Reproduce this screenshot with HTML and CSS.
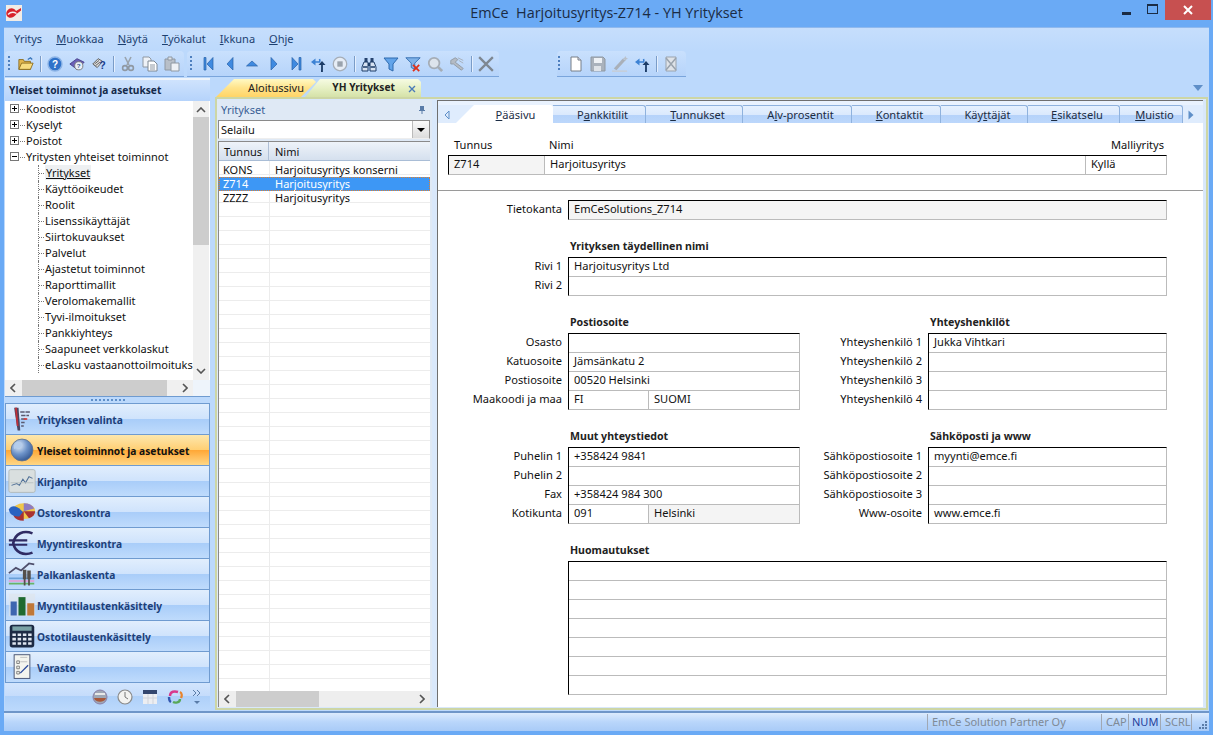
FILE: index.html
```html
<!DOCTYPE html>
<html lang="fi">
<head>
<meta charset="utf-8">
<title>EmCe Harjoitusyritys-Z714 - YH Yritykset</title>
<link rel="stylesheet" href="styles.css">
</head>
<body>
<div class="window">
  <header class="titlebar">
    <svg class="logo" viewBox="0 0 16 16"><rect width="16" height="16" fill="#f1ece6"/><path d="M1 6C4 2 8 3 10 6L15 3V5.5L10.5 9C8 13 3 14 1 11C0 9 0 8 1 6Z" fill="#d8222a"/><path d="M2 9.5C5 6.5 8 7 10.5 8.5" fill="none" stroke="#f6eeee" stroke-width="1.4"/></svg>
    <div class="title">EmCe&nbsp; Harjoitusyritys-Z714 - YH Yritykset</div>
    <div class="controls">
      <span class="ctl"><i class="min"></i></span>
      <span class="ctl"><i class="max"></i></span>
      <span class="ctl close"><svg viewBox="0 0 10 10" width="10" height="10"><path d="M1 1L9 9M9 1L1 9" stroke="#fff" stroke-width="2"/></svg></span>
    </div>
  </header>
  <div class="client">
    <nav class="menubar">
      <span>Yritys</span><span><u>M</u>uokkaa</span><span><u>N</u>äytä</span><span><u>T</u>yökalut</span><span><u>I</u>kkuna</span><span><u>O</u>hje</span>
    </nav>
    <div class="toolbars">
      <div class="tb tb1">
        <i class="grip"></i>
        <b class="ti"><svg viewBox="0 0 18 16"><path d="M1 3H6L7 5H14V14H1Z" fill="#e2b64e" stroke="#8a6a1c"/><path d="M1 14L4 7H17L14 14Z" fill="#f8dc80" stroke="#8a6a1c"/><path d="M11 3L14 1L16 3" fill="none" stroke="#3573b8" stroke-width="1.4"/></svg></b>
        <i class="sep"></i>
        <b class="ti"><svg viewBox="0 0 16 16"><circle cx="8" cy="8" r="7" fill="#2f72c9" stroke="#8db4e6" stroke-width="1.4"/><text x="8" y="12" class="gq">?</text></svg></b>
        <b class="ti"><svg viewBox="0 0 18 16"><path d="M1 8L9 2L17 6L9 14Z" fill="#6a5fb8" stroke="#453b86"/><circle cx="11" cy="10" r="4.6" fill="#e8eef7" stroke="#777"/><text x="11" y="13" class="gq small">?</text></svg></b>
        <b class="ti"><svg viewBox="0 0 18 16"><path d="M2 8L8 2L13 5L7 12Z" fill="#ddd" stroke="#555"/><path d="M4 8L9 4M5 10L10 6" stroke="#555"/><text x="13" y="14" class="gqb">?</text></svg></b>
        <i class="sep"></i>
        <b class="ti"><svg viewBox="0 0 16 16"><path d="M5 1L9 9M11 1L7 9" stroke="#9aa3ad" stroke-width="1.6"/><circle cx="5" cy="12" r="2.4" fill="none" stroke="#8f98a2" stroke-width="1.6"/><circle cx="11" cy="12" r="2.4" fill="none" stroke="#8f98a2" stroke-width="1.6"/></svg></b>
        <b class="ti"><svg viewBox="0 0 16 16"><path d="M1 1H7L9 3V11H1Z" fill="#eef2f7" stroke="#8f98a2"/><path d="M6 5H12L15 8V15H6Z" fill="#fff" stroke="#7f8994"/><path d="M8 9H13M8 11H13M8 13H13" stroke="#8f98a2"/></svg></b>
        <b class="ti"><svg viewBox="0 0 16 16"><path d="M1 3H11V14H1Z" fill="#b8bfc8" stroke="#8f98a2"/><path d="M4 1H8V4H4Z" fill="#dfe3e8" stroke="#8f98a2"/><path d="M7 7H15V15H7Z" fill="#eef1f5" stroke="#8f98a2"/></svg></b>
      </div>
      <div class="tb tb2">
        <i class="grip"></i>
        <b class="ti"><svg viewBox="0 0 16 16"><path d="M4 1.5H6V14H4ZM13 1.5V14L7 8Z" fill="#3f8ae0" stroke="#2a62a8" stroke-width=".7"/></svg></b>
        <b class="ti"><svg viewBox="0 0 16 16"><path d="M11 1.5V14L5 8Z" fill="#3f8ae0" stroke="#2a62a8" stroke-width=".7"/></svg></b>
        <b class="ti"><svg viewBox="0 0 16 16"><path d="M2.5 10H13.5L8 5Z" fill="#3f8ae0" stroke="#2a62a8" stroke-width=".7"/></svg></b>
        <b class="ti"><svg viewBox="0 0 16 16"><path d="M5 1.5V14L11 8Z" fill="#3f8ae0" stroke="#2a62a8" stroke-width=".7"/></svg></b>
        <b class="ti"><svg viewBox="0 0 16 16"><path d="M4 1.5V14L10 8ZM11 1.5H13V14H11Z" fill="#3f8ae0" stroke="#2a62a8" stroke-width=".7"/></svg></b>
        <b class="ti"><svg viewBox="0 0 16 16"><path d="M1 6L5.5 2.5V9.5Z" fill="#3d82d4"/><path d="M5 6H9.5C10 5 10 4 9.5 3" fill="none" stroke="#3d82d4" stroke-width="1.6"/><path d="M8.5 9L12 5L15.5 9Z" fill="#1d3d68"/><path d="M12 8V15L11 15" fill="none" stroke="#1d3d68" stroke-width="1.8"/></svg></b>
        <b class="ti"><svg viewBox="0 0 18 18"><circle cx="9" cy="9" r="7.6" fill="#e6edf6" stroke="#a6aeb8" stroke-width="1.4"/><rect x="6" y="6" width="6" height="6" fill="#9aa3ad"/></svg></b>
        <i class="sep"></i>
        <b class="ti"><svg viewBox="0 0 16 16"><path d="M3.5 2H6.5V6H3.5ZM9.5 2H12.5V6H9.5Z" fill="#26436e"/><path d="M3 6H7V15H1V11ZM9 6H13L15 11V15H9Z" fill="#d6e2f2" stroke="#1d3d68"/><path d="M7 7H9V10H7Z" fill="#1d3d68"/><path d="M2 11H6.5M9.5 11H14" stroke="#1d3d68" stroke-width="1.4"/></svg></b>
        <b class="ti"><svg viewBox="0 0 16 16"><path d="M1 2H15L10 8V15L6 13V8Z" fill="#62a4ea" stroke="#2f6aae"/></svg></b>
        <b class="ti"><svg viewBox="0 0 18 18"><path d="M1 2H17L11 8V15L7 13V8Z" fill="#7fb2e8" stroke="#2f6aae"/><path d="M9 10L16 17M16 10L9 17" stroke="#e03018" stroke-width="2"/></svg></b>
        <b class="ti"><svg viewBox="0 0 18 18"><circle cx="8" cy="8" r="6" fill="#dde4ec" stroke="#a5adb6" stroke-width="2"/><path d="M12 12L17 17" stroke="#a5adb6" stroke-width="3"/></svg></b>
        <b class="ti"><svg viewBox="0 0 18 18"><path d="M2 5L7 2L10 4L7 7L16 14L14 16L5 9L2 9Z" fill="#b4bbc4" stroke="#8f98a2"/><path d="M10 2L16 5M11 5L16 8" stroke="#a5adb6"/></svg></b>
        <i class="sep"></i>
        <b class="ti"><svg viewBox="0 0 14 14"><path d="M1 1L13 13M13 1L1 13" stroke="#7e8791" stroke-width="2"/></svg></b>
      </div>
      <div class="tb tb3">
        <i class="grip"></i>
        <b class="ti"><svg viewBox="0 0 14 16"><path d="M2 1H9L12 4V15H2Z" fill="#fff" stroke="#777f88"/><path d="M9 1V4H12" fill="#dde" stroke="#777f88"/></svg></b>
        <b class="ti"><svg viewBox="0 0 16 16"><path d="M1 1H13L15 3V15H1Z" fill="#aab2bc" stroke="#8f98a2"/><rect x="4" y="2" width="8" height="5" fill="#eef1f5"/><rect x="4" y="10" width="7" height="5" fill="#dfe3e8"/></svg></b>
        <b class="ti"><svg viewBox="0 0 18 18"><path d="M2 14L12 3L15 5L5 16Z" fill="#a9b0b9"/><path d="M15 0L16 2L18 3L16 4L15 6L14 4L12 3L14 2Z" fill="#b9c0c9"/><path d="M0 17H17" stroke="#c8ccd2" stroke-width="1.5"/></svg></b>
        <b class="ti"><svg viewBox="0 0 16 16"><path d="M1 6L5.5 2.5V9.5Z" fill="#3d82d4"/><path d="M5 6H9.5C10 5 10 4 9.5 3" fill="none" stroke="#3d82d4" stroke-width="1.6"/><path d="M8.5 9L12 5L15.5 9Z" fill="#1d3d68"/><path d="M12 8V15L11 15" fill="none" stroke="#1d3d68" stroke-width="1.8"/></svg></b>
        <i class="sep"></i>
        <b class="ti"><svg viewBox="0 0 14 16"><path d="M2 1H12V15H2Z" fill="#dfe3e8" stroke="#9aa3ad"/><path d="M2 2L12 14M12 2L2 14" stroke="#9aa3ad" stroke-width="1.5"/></svg></b>
      </div>
    </div>
    <div class="main">
      <aside class="sidebar">
        <h2 class="side-head">Yleiset toiminnot ja asetukset</h2>
        <div class="tree-wrap">
          <ul class="tree">
            <li class="top"><i class="pm plus"></i>Koodistot</li>
            <li class="top"><i class="pm plus"></i>Kyselyt</li>
            <li class="top"><i class="pm plus"></i>Poistot</li>
            <li class="top"><i class="pm"></i>Yritysten yhteiset toiminnot</li>
            <li class="sub sel"><span>Yritykset</span></li>
            <li class="sub"><span>Käyttöoikeudet</span></li>
            <li class="sub"><span>Roolit</span></li>
            <li class="sub"><span>Lisenssikäyttäjät</span></li>
            <li class="sub"><span>Siirtokuvaukset</span></li>
            <li class="sub"><span>Palvelut</span></li>
            <li class="sub"><span>Ajastetut toiminnot</span></li>
            <li class="sub"><span>Raporttimallit</span></li>
            <li class="sub"><span>Verolomakemallit</span></li>
            <li class="sub"><span>Tyvi-ilmoitukset</span></li>
            <li class="sub"><span>Pankkiyhteys</span></li>
            <li class="sub"><span>Saapuneet verkkolaskut</span></li>
            <li class="sub"><span>eLasku vastaanottoilmoituks</span></li>
          </ul>
          <div class="vscroll">
            <svg class="sa" viewBox="0 0 10 6"><path d="M1 5L5 1L9 5" fill="none" stroke="#555" stroke-width="1.6"/></svg>
            <div class="vthumb"></div>
            <svg class="sa" viewBox="0 0 10 6"><path d="M1 1L5 5L9 1" fill="none" stroke="#555" stroke-width="1.6"/></svg>
          </div>
        </div>
        <div class="hscroll tree-h">
          <svg class="sah" viewBox="0 0 6 10"><path d="M5 1L1 5L5 9" fill="none" stroke="#555" stroke-width="1.6"/></svg>
          <div class="hthumb"></div>
          <svg class="sah" viewBox="0 0 6 10"><path d="M1 1L5 5L1 9" fill="none" stroke="#555" stroke-width="1.6"/></svg>
        </div>
        <div class="splitter"><i></i></div>
        <div class="navs">
          <div class="nav"><svg viewBox="0 0 32 28"><path d="M7 1H12L14 27H11Z" fill="#4a4560"/><path d="M9 1L11 22" stroke="#c0303a" stroke-width="2"/><path d="M14 6H26M15 10H24M15 14H21M15 18H19M15 22H18" stroke="#5a5a70" stroke-width="1.6" stroke-dasharray="5 1"/><path d="M18 14H22" stroke="#d04040" stroke-width="2"/></svg>Yrityksen valinta</div>
          <div class="nav on"><svg viewBox="0 0 32 28"><defs><radialGradient id="gl" cx=".35" cy=".3" r=".8"><stop offset="0" stop-color="#e4eefa"/><stop offset=".5" stop-color="#6d93c9"/><stop offset="1" stop-color="#2c4f8a"/></radialGradient></defs><circle cx="16" cy="14" r="12.5" fill="url(#gl)" stroke="#63758c"/><path d="M10 5C14 4 18 6 16 10C14 13 10 11 7 13C6 10 7 7 10 5Z" fill="#b5cdec"/></svg>Yleiset toiminnot ja asetukset</div>
          <div class="nav"><svg viewBox="0 0 32 28"><rect x="1" y="1" width="30" height="26" rx="2" fill="#d9dfdf" stroke="#aeb6b6"/><path d="M4 19L10 17L13 19L17 12L20 16L24 9L28 11" fill="none" stroke="#4f6f96" stroke-width="1.2"/><path d="M3 16H29" stroke="#b8c0c0"/></svg>Kirjanpito</div>
          <div class="nav"><svg viewBox="0 0 32 28"><ellipse cx="18" cy="13" rx="13" ry="9" fill="#f0c64a"/><path d="M18 13L31 13A13 9 0 0 1 24 21Z" fill="#a83232"/><path d="M18 13L18 24A13 9 0 0 1 6 18Z" fill="#a83232"/><path d="M1 11C4 6 10 6 17 14L13 19C8 19 2 18 1 11Z" fill="#2a62c0"/><path d="M18 4A13 9 0 0 1 30 10L18 13Z" fill="#8f7cc0"/></svg>Ostoreskontra</div>
          <div class="nav"><svg viewBox="0 0 32 28"><path d="M28 3C18 -1 8 3 6 14C8 25 18 29 28 25" fill="none" stroke="#2f2b63" stroke-width="3"/><path d="M1 11H22M1 16H22" stroke="#2f2b63" stroke-width="2.4"/></svg>Myyntireskontra</div>
          <div class="nav"><svg viewBox="0 0 32 28"><path d="M1 13L9 7L15 10L24 2L30 3" fill="none" stroke="#4f4f6c" stroke-width="2"/><path d="M1 22H30" stroke="#e2a0d8" stroke-width="2"/><path d="M1 25H30" stroke="#68b468" stroke-width="2"/><path d="M1 19H30" stroke="#6aa0d8" stroke-width="2"/><path d="M17 9H21V20H20V27H18V20H17ZM22 10H26V20H25V27H23V20H22Z" fill="#55504c"/></svg>Palkanlaskenta</div>
          <div class="nav"><svg viewBox="0 0 32 28"><rect x="1" y="1" width="30" height="26" fill="#dfe4ea" opacity=".6"/><rect x="3" y="10" width="7" height="16" fill="#3e66b0"/><rect x="12" y="5" width="8" height="21" fill="#1f6a30"/><rect x="22" y="12" width="8" height="14" fill="#c07838"/></svg>Myyntitilaustenkäsittely</div>
          <div class="nav"><svg viewBox="0 0 32 28"><rect x="2" y="1" width="28" height="26" rx="3" fill="#1c2a44"/><rect x="5" y="3" width="22" height="5" fill="#7aa2a6"/><g fill="#dfe6f0"><path d="M5 11h4v3H5zM11 11h4v3h-4zM17 11h4v3h-4zM23 11h4v3h-4zM5 16h4v3H5zM11 16h4v3h-4zM17 16h4v3h-4zM23 16h4v3h-4zM5 21h4v3H5zM11 21h4v3h-4zM17 21h4v3h-4zM23 21h4v3h-4z"/></g></svg>Ostotilaustenkäsittely</div>
          <div class="nav"><svg viewBox="0 0 32 28"><rect x="7" y="0" width="18" height="27" fill="#f4f5ef" stroke="#3a4668"/><path d="M10 7h3v3h-3zM10 13h3v3h-3zM10 19h3v3h-3z" fill="none" stroke="#777"/><path d="M14 21L23 12" stroke="#2b4a9a" stroke-width="1.5"/><path d="M14 8H22M14 3H22" stroke="#bbb"/></svg>Varasto</div>
        </div>
        <div class="nav-foot">
          <svg viewBox="0 0 16 16"><circle cx="8" cy="8" r="7" fill="#9fa7b5" stroke="#8a80a8"/><path d="M2 9H14C13 14 3 14 2 9Z" fill="#a8583a"/><path d="M3 5H13" stroke="#e8e8e8" stroke-width="2"/></svg>
          <svg viewBox="0 0 16 16"><circle cx="8" cy="8" r="7" fill="#f2f2f0" stroke="#8a8a8a" stroke-width="1.2"/><path d="M8 3V8L11 10" fill="none" stroke="#777"/></svg>
          <svg viewBox="0 0 16 16"><rect x="1" y="1" width="14" height="14" fill="#eceef2"/><rect x="1" y="1" width="14" height="4" fill="#33466e"/><path d="M1 9H15M6 5V15M11 5V15" stroke="#d0d3da"/></svg>
          <svg viewBox="0 0 16 16"><path d="M3 7C3 2 8 2 11 3" fill="none" stroke="#d83a8c" stroke-width="2.4"/><path d="M13 3C15 4 15 7 14 9" fill="none" stroke="#e8842c" stroke-width="2.4"/><path d="M13 10C13 14 8 14 6 13" fill="none" stroke="#58a858" stroke-width="2.4"/><path d="M4 13C2 12 2 10 2 8" fill="none" stroke="#3458b0" stroke-width="2.4"/></svg>
          <svg class="more" viewBox="0 0 10 16"><path d="M1 1L4 4L1 7M5 1L8 4L5 7" fill="none" stroke="#5a7ca8"/><path d="M2 12H8L5 15Z" fill="#5a7ca8"/></svg>
        </div>
      </aside>
      <section class="workspace">
        <div class="doctabs">
          <div class="dtab yellow">Aloitussivu</div>
          <div class="dtab green">YH Yritykset<svg class="dx" viewBox="0 0 8 8"><path d="M1 1L7 7M7 1L1 7" stroke="#4a7ab8" stroke-width="1.4"/></svg></div>
          <svg class="dmenu" viewBox="0 0 10 6"><path d="M0 0H10L5 6Z" fill="#5f8fc8"/></svg>
        </div>
        <div class="docbody">
          <div class="listpanel">
            <div class="lp-head"><span>Yritykset</span><svg viewBox="0 0 8 10"><path d="M2 1H6V5H7V6H4.5V9H3.5V6H1V5H2Z" fill="#5a7ca8"/></svg></div>
            <div class="combo"><span>Selailu</span><b><svg viewBox="0 0 8 4"><path d="M0 0H8L4 4Z" fill="#000"/></svg></b></div>
            <div class="gridbox">
              <div class="ghead"><span class="c1">Tunnus</span><span class="c2">Nimi</span></div>
              <div class="grows">
                <div class="grow"><span class="c1">KONS</span><span class="c2">Harjoitusyritys konserni</span></div>
                <div class="grow sel"><span class="c1">Z714</span><span class="c2">Harjoitusyritys</span></div>
                <div class="grow"><span class="c1">ZZZZ</span><span class="c2">Harjoitusyritys</span></div>
              </div>
              <div class="hscroll grid-h">
                <svg class="sah" viewBox="0 0 6 10"><path d="M5 1L1 5L5 9" fill="none" stroke="#555" stroke-width="1.6"/></svg>
                <div class="hthumb g"></div>
                <svg class="sah" viewBox="0 0 6 10"><path d="M1 1L5 5L1 9" fill="none" stroke="#555" stroke-width="1.6"/></svg>
              </div>
            </div>
          </div>
          <div class="detail">
            <div class="tabs">
              <svg class="ta" viewBox="0 0 6 10"><path d="M5 1L1 5L5 9Z" fill="#dceafc" stroke="#5f8fc8"/></svg>
              <div class="tab active"><u>P</u>ääsivu</div>
              <div class="tab w93">P<u>a</u>nkkitilit</div>
              <div class="tab w97"><u>T</u>unnukset</div>
              <div class="tab w109">A<u>l</u>v-prosentit</div>
              <div class="tab w89"><u>K</u>ontaktit</div>
              <div class="tab w87">Käy<u>t</u>täjät</div>
              <div class="tab w92"><u>E</u>sikatselu</div>
              <div class="tab w63"><u>M</u>uistio</div>
              <svg class="ta right" viewBox="0 0 6 10"><path d="M0.5 0.5L5.5 5L0.5 9.5Z" fill="#5f8fc8"/></svg>
            </div>
            <div class="form">
              <div class="hd-labels"><span class="h1">Tunnus</span><span class="h2">Nimi</span><span class="h3">Malliyritys</span></div>
              <div class="box hd-box">
                <div class="row">
                  <span class="cell hc1 ro">Z714</span>
                  <span class="cell hc2">Harjoitusyritys</span>
                  <span class="cell hc3">Kyllä</span>
                </div>
              </div>
              <hr class="rule">
              <div class="line dbline"><label>Tietokanta</label><div class="box w599"><div class="row ro"><span class="cell">EmCeSolutions_Z714</span></div></div></div>

              <h3 class="sec one">Yrityksen täydellinen nimi</h3>
              <div class="line"><div class="labels"><label>Rivi 1</label><label>Rivi 2</label></div>
                <div class="box w599"><div class="row"><span class="cell">Harjoitusyritys Ltd</span></div><div class="row"></div></div></div>

              <div class="cols c-post">
                <div class="group">
                  <h3 class="sec">Postiosoite</h3>
                  <div class="line"><div class="labels"><label>Osasto</label><label>Katuosoite</label><label>Postiosoite</label><label>Maakoodi ja maa</label></div>
                    <div class="box w232"><div class="row"></div><div class="row"><span class="cell">Jämsänkatu 2</span></div><div class="row"><span class="cell">00520 Helsinki</span></div><div class="row"><span class="cell code">FI</span><span class="cell">SUOMI</span></div></div></div>
                </div>
                <div class="group right">
                  <h3 class="sec">Yhteyshenkilöt</h3>
                  <div class="line"><div class="labels"><label>Yhteyshenkilö 1</label><label>Yhteyshenkilö 2</label><label>Yhteyshenkilö 3</label><label>Yhteyshenkilö 4</label></div>
                    <div class="box w239"><div class="row"><span class="cell">Jukka Vihtkari</span></div><div class="row"></div><div class="row"></div><div class="row"></div></div></div>
                </div>
              </div>

              <div class="cols c-muut">
                <div class="group">
                  <h3 class="sec">Muut yhteystiedot</h3>
                  <div class="line"><div class="labels"><label>Puhelin 1</label><label>Puhelin 2</label><label>Fax</label><label>Kotikunta</label></div>
                    <div class="box w232"><div class="row"><span class="cell">+358424 9841</span></div><div class="row"></div><div class="row"><span class="cell">+358424 984 300</span></div><div class="row"><span class="cell code">091</span><span class="cell shade">Helsinki</span></div></div></div>
                </div>
                <div class="group right">
                  <h3 class="sec">Sähköposti ja www</h3>
                  <div class="line"><div class="labels"><label>Sähköpostiosoite 1</label><label>Sähköpostiosoite 2</label><label>Sähköpostiosoite 3</label><label>Www-osoite</label></div>
                    <div class="box w239"><div class="row"><span class="cell">myynti@emce.fi</span></div><div class="row"></div><div class="row"></div><div class="row"><span class="cell">www.emce.fi</span></div></div></div>
                </div>
              </div>

              <h3 class="sec notes">Huomautukset</h3>
              <div class="line"><div class="labels"></div>
                <div class="box w599"><div class="row"></div><div class="row"></div><div class="row"></div><div class="row"></div><div class="row"></div><div class="row"></div><div class="row"></div></div></div>
            </div>
          </div>
        </div>
      </section>
    </div>
    <footer class="status">
      <span class="st company">EmCe Solution Partner Oy</span>
      <span class="st cap">CAP</span><span class="st num">NUM</span><span class="st scrl">SCRL</span>
      <svg class="resize" viewBox="0 0 10 10"><path d="M7 1h2v2H7zM4 4h2v2H4zM7 4h2v2H7zM1 7h2v2H1zM4 7h2v2H4zM7 7h2v2H7z" fill="#5a7ca8"/></svg>
    </footer>
  </div>
</div>
</body>
</html>
```
FILE: styles.css
```css
* { box-sizing: border-box; }
html, body { margin: 0; height: 100%; overflow: hidden; }
body { font: 11px/14px "Noto Sans", "Liberation Sans", sans-serif; color: #111; }
ul { margin: 0; padding: 0; list-style: none; }
h2, h3 { margin: 0; }
svg { display: block; flex: none; }
.window { width: 1213px; height: 735px; display: flex; flex-direction: column; background: #6aaaf5; }

.titlebar { height: 27px; flex: none; display: flex; align-items: flex-start; position: relative; }
.logo { width: 16px; height: 16px; margin: 5px 0 0 6px; }
.title { position: absolute; left: 0; right: 0; top: 3px; text-align: center; font: 14.4px/20px "Open Sans", sans-serif; color: #1b2c44; }
.controls { margin-left: auto; margin-right: 2px; display: flex; position: relative; }
.ctl { width: 26px; height: 20px; display: flex; align-items: center; justify-content: center; }
.ctl.close { width: 46px; background: #c75050; margin-left: 0; }
.min { width: 9px; height: 3px; background: #1b2c44; margin-top: 7px; }
.max { width: 11px; height: 10px; border: 1px solid #1b2c44; border-top-width: 2px; margin-top: -2px; }

.client { flex: 1; min-height: 0; margin: 0 4px 4px; background: #bcd9fc; display: flex; flex-direction: column; border-top: 1px solid #8fb9ee; }
.menubar { height: 23px; flex: none; display: flex; padding: 4px 0 0 10px; gap: 14px; color: #1c3f70; font-size: 11px; background: linear-gradient(#c6defc, #bcd9fc); }
.toolbars { height: 27px; flex: none; display: flex; position: relative; }
.tb { height: 26px; display: flex; align-items: center; background: linear-gradient(#c9e0fd, #b6d4fa); border-radius: 4px 4px 0 0; border-bottom: 1px solid #7aa5dc; }
.tb1 { margin-left: 1px; width: 179px; padding-left: 3px; }
.tb2 { margin-left: 3px; width: 312px; padding-left: 3px; }
.tb3 { margin-left: 58px; width: 129px; padding-left: 1px; }
.grip { width: 2px; height: 16px; margin-right: 5px; background: repeating-linear-gradient(#4d7fbf 0 2px, transparent 2px 4px); }
.ti { width: 22px; height: 22px; display: flex; align-items: center; justify-content: center; }
.ti svg { width: 16px; height: 16px; }
.sep { width: 1px; height: 16px; background: #7a9cc8; margin: 0 3px; box-shadow: 1px 0 #e4effe; }
.gq { font: bold 10px "Liberation Sans", sans-serif; fill: #fff; text-anchor: middle; }
.gq.small { font-size: 7px; fill: #2a4f90; }
.gqb { font: bold 12px "Liberation Sans", sans-serif; fill: #1c3f90; text-anchor: middle; }

.main { flex: 1; min-height: 0; display: flex; }
.sidebar { width: 205px; flex: none; margin-left: 1px; display: flex; flex-direction: column; background: #eef4fb; }
.side-head { height: 21px; flex: none; margin-top: 2px; font-size: 10.2px; line-height: 21px; font-weight: 700; padding-left: 4px; color: #14294a; background: linear-gradient(#cfe3fd, #b5d3fb); }
.tree-wrap { height: 279px; flex: none; display: flex; background: #fff; overflow: hidden; }
.tree { width: 188px; flex: none; overflow: hidden; white-space: nowrap; }
.tree li { height: 16px; line-height: 16px; position: relative; color: #111; }
.top { padding-left: 21px; }
.sub { padding-left: 40px; }
.top::before { content: ""; position: absolute; left: 15px; top: 8px; width: 5px; border-top: 1px dotted #777; }
.sub::before { content: ""; position: absolute; left: 33px; top: 0; height: 16px; border-left: 1px dotted #777; }
.sub::after { content: ""; position: absolute; left: 34px; top: 8px; width: 5px; border-top: 1px dotted #777; }
.pm { position: absolute; left: 5px; top: 3px; width: 9px; height: 9px; border: 1px solid #777; background: linear-gradient(#000, #000) center/5px 1px no-repeat #fff; }
.pm.plus { background: linear-gradient(#000, #000) center/5px 1px no-repeat, linear-gradient(#000, #000) center/1px 5px no-repeat, #fff; }
.tree .sel span { background: #eef0f2; text-decoration: underline; padding: 0 1px; }
.vscroll { width: 16px; background: #f0f0f0; display: flex; flex-direction: column; align-items: center; justify-content: space-between; padding: 6px 0; position: relative; }
.vthumb { position: absolute; left: 0; right: 0; top: 16px; height: 128px; background: #cdcdcd; }
.sa { width: 10px; height: 6px; position: relative; }
.hscroll { height: 16px; flex: none; background: #f0f0f0; display: flex; align-items: center; justify-content: space-between; padding: 0 5px; position: relative; }
.tree-h { width: 188px; }
.sah { width: 6px; height: 10px; position: relative; }
.hthumb { position: absolute; top: 0; bottom: 0; left: 17px; width: 145px; background: #cdcdcd; }
.splitter { height: 7px; flex: none; display: flex; align-items: center; justify-content: center; background: #bcd9fc; border-top: 1px solid #6f9bd0; }
.splitter i { width: 34px; height: 2px; background: repeating-linear-gradient(90deg, #5f8fc8 0 2px, transparent 2px 4px); }
.navs { flex: none; display: flex; flex-direction: column; }
.nav { height: 31px; display: flex; align-items: center; gap: 1px; padding: 2px 0 0 2px; border: 1px solid #6f9bd0; border-width: 1px 1px 0 1px; font-weight: 700; font-size: 10.2px; color: #1d4079; background: linear-gradient(#e1eefd, #cfe3fc 50%, #a9cdf9 51%, #bfdbfc); }
.nav svg { width: 28px; height: 26px; margin-top: -2px; }
.nav.on { color: #111; background: linear-gradient(#fde7ad, #ffcf73 50%, #ffa736 51%, #ffd785); }
.nav-foot { flex: 1; display: flex; align-items: center; justify-content: flex-end; gap: 9px; padding: 0 8px 0 0; border-top: 1px solid #6f9bd0; background: linear-gradient(#d2e5fd, #c5dcfb 45%, #aed0f9 46%, #bcd9fc); }
.nav-foot svg { width: 16px; height: 16px; }
.nav-foot .more { width: 10px; }

.workspace { flex: 1; min-width: 0; display: flex; flex-direction: column; margin: 0 1px 1px 5px; }
.doctabs { height: 18px; margin-top: 1px; padding-left: 1px; flex: none; display: flex; position: relative; align-items: flex-end; }
.dtab { height: 18px; line-height: 17px; text-align: right; font-size: 11px; color: #222; }
.yellow { width: 100px; padding-right: 12px; background: linear-gradient(#fff9c4, #ffe38a 50%, #ffd466); clip-path: polygon(18px 0, 97px 0, 100px 3px, 85px 18px, 0 18px); }
.green { width: 116px; margin-left: -11px; padding-right: 26px; font-size: 10.2px; font-weight: 700; background: linear-gradient(#f6fbe3, #e6f0c4 50%, #d5e2a8); clip-path: polygon(15px 0, 113px 0, 116px 3px, 116px 18px, 0 18px); position: relative; }
.dx { position: absolute; right: 5px; top: 6px; width: 8px; height: 8px; }
.dmenu { position: absolute; right: 5px; top: 6px; width: 10px; height: 6px; }
.docbody { flex: 1; min-height: 0; display: flex; background: #d9e8fb; border: 2px solid #cdd6a5; padding: 1px 3px 1px 0; gap: 5px; }
.listpanel { width: 215px; flex: none; display: flex; flex-direction: column; background: #dfe9f5; }
.lp-head { height: 20px; flex: none; display: flex; align-items: center; justify-content: space-between; padding: 0 6px 0 4px; color: #3a5f96; }
.lp-head svg { width: 8px; height: 10px; }
.combo { height: 19px; margin: 0 2px 0 1px; flex: none; display: flex; align-items: center; justify-content: space-between; background: #fff; border: 1px solid #8a8a8a; border-bottom-color: #eee; padding-left: 2px; }
.combo b { width: 17px; height: 17px; background: linear-gradient(#fafafa, #dcdcdc); border-left: 1px solid #bbb; display: flex; align-items: center; justify-content: center; }
.combo svg { width: 8px; height: 4px; }
.gridbox { flex: 1; min-height: 0; margin: 2px 2px 0 1px; display: flex; flex-direction: column; border: 1px solid #8a8a8a; border-width: 1px 0 0 1px; background: #fff; }
.ghead { height: 19px; flex: none; display: flex; line-height: 19px; background: linear-gradient(#eef3f9, #d5e0ee); border-bottom: 1px solid #a9bdd6; }
.ghead .c1 { border-right: 1px solid #aebfd6; padding-left: 5px; }
.c1 { width: 50px; flex: none; padding-left: 4px; }
.c2 { flex: 1; padding-left: 6px; white-space: nowrap; }
.grows { flex: 1; min-height: 0; padding-top: 2px; background: repeating-linear-gradient(#fff 0 13px, #ececec 13px 14px); position: relative; }
.grows::before { content: ""; position: absolute; top: 0; bottom: 0; left: 50px; border-left: 1px solid #ececec; }
.grow { height: 14px; display: flex; line-height: 14px; position: relative; }
.grow.sel { background: #3d97f5; color: #fff; outline: 1px dotted #e08030; outline-offset: -1px; }
.hthumb.g { left: 17px; width: 83px; }
.grid-h { height: 16px; background: #eeeeee; }

.detail { flex: 1; min-width: 0; display: flex; flex-direction: column; background: #fff; border: 0 solid #6f6f6f; border-width: 1px 0 0 1px; }
.tabs { height: 18px; flex: none; margin-top: 4px; display: flex; align-items: flex-end; background: #dfecfd; position: relative; padding-left: 18px; box-shadow: 0 -4px #e9f2fe; }
.ta { position: absolute; left: 6px; top: 5px; width: 6px; height: 10px; }
.ta.right { left: auto; right: 9px; }
.tab { height: 18px; line-height: 18px; text-align: center; padding-left: 7px; font-size: 11.1px; color: #1b2c44; border: 1px solid #8fb2de; border-left-width: 0; border-bottom: 0; border-radius: 0 3px 0 0; background: linear-gradient(#e6f1fe, #dbe9fd 50%, #b5d2fa 51%, #bcd7fb); }
.tab.active { width: 97px; padding-left: 22px; border: 0; background: #fff; position: relative; line-height: 20px; clip-path: polygon(18px 0, 100% 0, 100% 100%, 0 100%); }
.w93 { width: 93px; } .w97 { width: 97px; } .w109 { width: 109px; } .w89 { width: 89px; } .w87 { width: 87px; } .w92 { width: 92px; } .w63 { width: 63px; }

.form { flex: 1; min-height: 0; padding: 0 0 0 10px; position: relative; font-size: 11.1px; }
.hd-labels { display: flex; height: 14px; margin: 15px 0 3px; position: relative; }
.h1 { margin-left: 6px; width: 95px; }
.h2 { flex: 1; }
.h3 { margin-right: 39px; }
.box { border: 1px solid #bbb; border-top-color: #000; border-left-color: #000; }
.hd-box { width: 719px; }
.ro { background: #f4f4f4; }
.row { height: 19px; display: flex; border-bottom: 1px solid #bbb; }
.row:last-child { height: 18px; border-bottom: 0; }
.cell { flex: 1; padding-left: 5px; line-height: 16px; white-space: nowrap; }
.cell + .cell { border-left: 1px solid #bbb; }
.cell.code { flex: none; width: 79px; background: #fff; }
.cell.hc1 { flex: none; width: 95px; }
.cell.hc3 { flex: none; width: 81px; }
.shade { background: #f4f4f4; }
.rule { margin: 15px 0 0 -10px; border: 0; border-top: 1px solid #9a9a9a; height: 0; }
.line { display: flex; margin-left: 0; }
.line label { display: block; height: 19px; line-height: 18px; text-align: right; }
.labels, .dbline > label { width: 124px; flex: none; margin-right: 6px; margin-left: -10px; }
.dbline { margin-top: 9px; }
.dbline .box { height: 20px; }
.w599 { width: 599px; margin-left: 0; }
.w232 { width: 232px; }
.w239 { width: 239px; }
.sec { font-size: 10.6px; line-height: 14px; font-weight: 700; margin: 0 0 4px 122px; color: #222; }
.sec.one { margin-top: 19px; }
.sec.notes { margin-top: 19px; }
.cols { display: flex; }
.c-post { margin-top: 19px; }
.c-muut { margin-top: 19px; }
.group { width: 352px; flex: none; }
.group.right { width: 367px; }
.group.right .sec { margin-left: 130px; }
.group.right .labels { margin-left: 0; width: 122px; }

.status { height: 20px; flex: none; display: flex; align-items: center; justify-content: flex-end; background: linear-gradient(#dcebfd, #b9d6fb 50%, #a9cbf7); border-top: 2px solid #6f96c8; font-size: 11px; color: #7f8a96; position: relative; }
.st { height: 16px; line-height: 16px; border-left: 1px solid #a0a8b4; }
.company { width: 174px; padding-left: 4px; }
.cap { width: 27px; padding-left: 4px; }
.num { width: 32px; padding-left: 3px; color: #24409a; }
.scrl { width: 32px; padding-left: 4px; border-right: 1px solid #a0a8b4; }
.resize { width: 10px; height: 10px; margin: 6px 1px 0 6px; }
```
